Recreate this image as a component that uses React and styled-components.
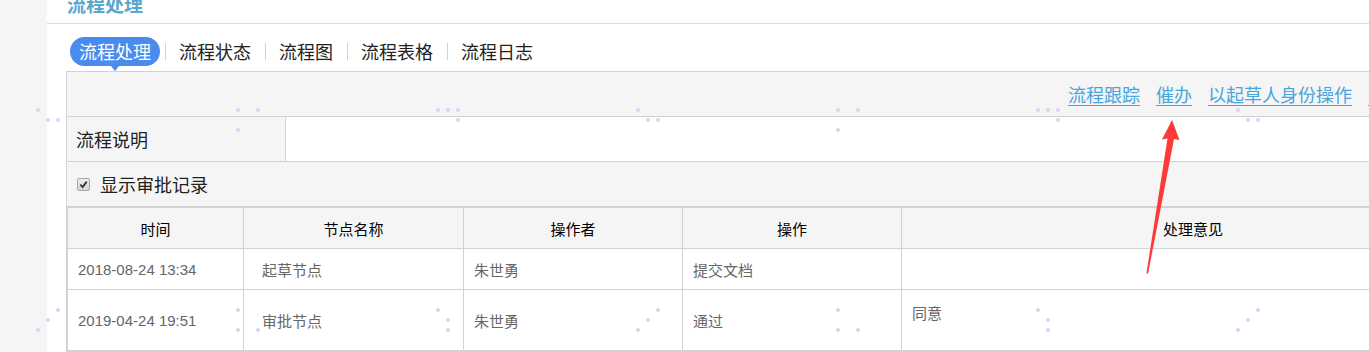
import React from "react";
import styled, { createGlobalStyle } from "styled-components";

const GlobalStyle = createGlobalStyle`
  html, body { margin: 0; padding: 0; background: #f5f5f5; }
  body { font-family: "Noto Sans CJK SC", "Noto Sans", sans-serif; overflow: hidden; }
  * { box-sizing: border-box; }
`;

const Page = styled.div`
  position: relative;
  display: flex;
  width: 1369px;
  height: 352px;
  overflow: hidden;
`;

const Sidebar = styled.div`
  width: 47px;
  flex: none;
  background: #f5f5f5;
`;

const Main = styled.div`
  flex: 1;
  min-width: 0;
  background: #fff;
  display: flex;
  flex-direction: column;
`;

const Header = styled.div`
  height: 25px;
  border-bottom: 1px solid #bee3f1;
  padding-left: 20px;
  overflow: hidden;
`;

const Title = styled.h1`
  margin: -7px 0 0 0;
  font-size: 19px;
  line-height: 22px;
  font-weight: bold;
  color: #5aa7d0;
`;

const Content = styled.div`
  padding: 13px 0 0 19px;
  display: flex;
  flex-direction: column;
`;

const Tabs = styled.div`
  display: flex;
  align-items: center;
  height: 29px;
  padding-left: 4px;
  margin-bottom: 5px;
`;

const Tab = styled.div`
  position: relative;
  height: 29px;
  line-height: 29px;
  padding: 0 9px;
  font-size: 18px;
  color: ${(p) => (p.$active ? "#fff" : "#222")};
  background: ${(p) => (p.$active ? "#4a8bef" : "transparent")};
  border-radius: 15px;
  ${(p) =>
    p.$active &&
    `&::after {
      content: "";
      position: absolute;
      left: 50%;
      bottom: -5px;
      margin-left: -4px;
      border-left: 4px solid transparent;
      border-right: 4px solid transparent;
      border-top: 5px solid #4a8bef;
    }`}
`;

const Sep = styled.span`
  width: 1px;
  height: 17px;
  background: #d2d2d2;
  margin: 0 4.5px;
`;

const Box = styled.div`
  width: 1420px;
  border: 1px solid #d2d2d2;
  background: #f5f5f5;
`;

const Toolbar = styled.div`
  height: 45px;
  border-bottom: 1px solid #d2d2d2;
  display: flex;
  align-items: center;
  justify-content: flex-end;
  padding-right: 42px;
  gap: 13px;
`;

const Link = styled.a`
  font-size: 18px;
  color: #46a6dd;
  text-decoration: underline;
  text-underline-offset: 3px;
  cursor: pointer;
  padding-right: 3px;
`;

const InfoRow = styled.div`
  display: flex;
  height: 45px;
  border-bottom: 1px solid #d2d2d2;
`;

const Label = styled.div`
  width: 218px;
  flex: none;
  padding-left: 9px;
  display: flex;
  align-items: center;
  font-size: 18px;
  color: #222;
`;

const Value = styled.div`
  flex: 1;
  background: #fff;
  border-left: 1px solid #d2d2d2;
`;

const CheckRow = styled.label`
  display: flex;
  align-items: center;
  height: 45px;
  padding-left: 10px;
  gap: 10px;
  font-size: 18px;
  color: #222;
  border-bottom: 1px solid #d2d2d2;
`;

const CheckBox = styled.span`
  width: 13px;
  height: 13px;
  border: 1px solid #a8a8a8;
  border-radius: 2px;
  background: linear-gradient(#ececec, #d6d6d6);
  display: flex;
  align-items: center;
  justify-content: center;
`;

const Table = styled.table`
  width: 100%;
  border-collapse: collapse;
  table-layout: fixed;
  border-top: 1px solid #d2d2d2;
  border-left: 1px solid #d2d2d2;
  font-family: "Liberation Sans", "Noto Sans CJK SC", sans-serif;
  font-size: 15px;
`;

const Th = styled.th`
  height: 41px;
  font-weight: normal;
  color: #000;
  background: #f5f5f5;
  border: 1px solid #d2d2d2;
  text-align: center;
  font-family: "Noto Sans CJK SC", sans-serif;
  font-size: 15px;
`;

const Td = styled.td`
  height: ${(p) => p.$h || 41}px;
  background: #fff;
  border: 1px solid #d2d2d2;
  color: #666;
  padding: ${(p) => (p.$top ? "12px" : "0")} 10px 0 ${(p) => p.$pl || 10}px;
  vertical-align: ${(p) => (p.$top ? "top" : "middle")};
  white-space: nowrap;
`;

const Overlay = styled.svg`
  position: absolute;
  left: 0;
  top: 0;
  pointer-events: none;
`;

const dots = [
  [38,110],[48,120],[58,120],[238,110],[258,110],[238,130],[438,110],[448,110],[458,110],[458,120],
  [638,110],[648,120],[658,120],[838,110],[858,110],[838,130],[1038,110],[1048,110],[1058,110],[1058,120],
  [1238,110],[1248,120],[1258,120],
  [58,310],[48,320],[38,330],[238,310],[238,330],[258,330],[438,310],[448,320],[448,330],
  [658,310],[648,320],[638,330],[838,310],[838,330],[858,330],[1038,310],[1048,320],[1048,330],
  [1258,310],[1248,320],[1238,330],
];

const rows = [
  { time: "2018-08-24 13:34", node: "起草节点", user: "朱世勇", op: "提交文档", note: "", h: 41 },
  { time: "2019-04-24 19:51", node: "审批节点", user: "朱世勇", op: "通过", note: "同意", h: 61 },
];

export default function App() {
  const tabs = ["流程处理", "流程状态", "流程图", "流程表格", "流程日志"];
  return (
    <>
      <GlobalStyle />
      <Page>
        <Sidebar />
        <Main>
          <Header>
            <Title>流程处理</Title>
          </Header>
          <Content>
            <Tabs>
              {tabs.map((t, i) => (
                <React.Fragment key={t}>
                  {i > 0 && <Sep />}
                  <Tab $active={i === 0}>{t}</Tab>
                </React.Fragment>
              ))}
            </Tabs>
            <Box>
              <Toolbar>
                <Link>流程跟踪</Link>
                <Link>催办</Link>
                <Link>以起草人身份操作</Link>
                <Link>历史记录</Link>
              </Toolbar>
              <InfoRow>
                <Label>流程说明</Label>
                <Value />
              </InfoRow>
              <CheckRow>
                <CheckBox>
                  <svg width="9" height="9" viewBox="0 0 10 10">
                    <path d="M1.5 5.2 L4 7.8 L8.6 1.8" fill="none" stroke="#333" strokeWidth="2" />
                  </svg>
                </CheckBox>
                显示审批记录
              </CheckRow>
              <Table>
                <colgroup>
                  <col style={{ width: 176 }} />
                  <col style={{ width: 220 }} />
                  <col style={{ width: 219 }} />
                  <col style={{ width: 219 }} />
                  <col />
                </colgroup>
                <thead>
                  <tr>
                    <Th>时间</Th>
                    <Th>节点名称</Th>
                    <Th>操作者</Th>
                    <Th>操作</Th>
                    <Th>处理意见</Th>
                  </tr>
                </thead>
                <tbody>
                  {rows.map((r) => (
                    <tr key={r.time}>
                      <Td $h={r.h}>{r.time}</Td>
                      <Td $h={r.h} $pl={18}>{r.node}</Td>
                      <Td $h={r.h}>{r.user}</Td>
                      <Td $h={r.h}>{r.op}</Td>
                      <Td $h={r.h} $top>{r.note}</Td>
                    </tr>
                  ))}
                </tbody>
              </Table>
            </Box>
          </Content>
        </Main>
        <Overlay width="1369" height="352">
          {dots.map(([x, y], i) => (
            <circle key={i} cx={x} cy={y} r="2" fill="#ddd0f7" />
          ))}
          <path d="M1172 120 L1179.5 140 L1174 139 L1148 274 L1146.5 273 L1167.5 138.5 L1162 139.5 Z" fill="#ff3838" />
        </Overlay>
      </Page>
    </>
  );
}
